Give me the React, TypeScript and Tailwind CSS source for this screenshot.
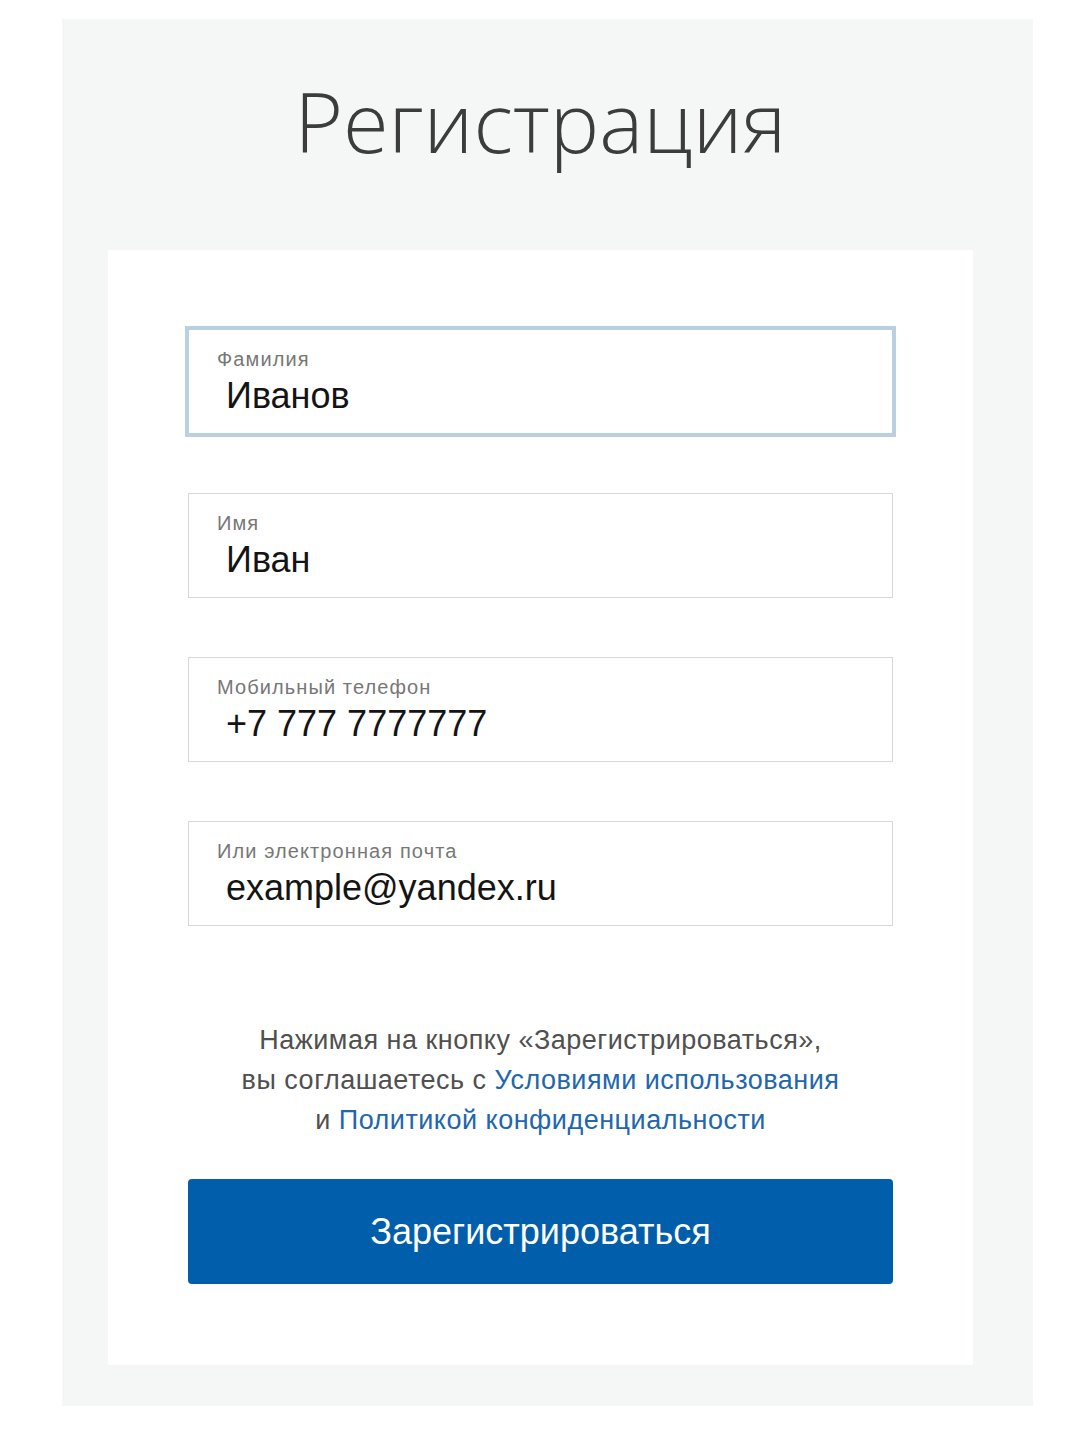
import React from "react";

function Field({ label, value, focused }: { label: string; value: string; focused?: boolean }) {
  return (
    <div
      className={
        focused
          ? "h-[105px] border border-[#b9d0e3] bg-white pl-[28px] pt-[17px] shadow-[0_0_0_3px_#b9d0e3]"
          : "h-[105px] border border-[#d6d9da] bg-white pl-[28px] pt-[17px]"
      }
    >
      <div className="text-[20px] leading-[24px] tracking-[1.1px] text-[#777]">{label}</div>
      <div className="mt-[5px] pl-[9px] text-[36px] leading-[40px] text-[#141414]">{value}</div>
    </div>
  );
}

export default function App() {
  return (
    <div className="min-h-[1449px] bg-white pt-[19px] font-['Liberation_Sans',Arial,sans-serif]">
      <div className="ml-[62px] w-[971px] bg-[#f5f7f7] pb-[41px]">
        <div className="h-[231px] pt-[60px] pr-[14px] text-center font-['Open_Sans',sans-serif] text-[83px] font-light leading-[83px] text-[#3c3c3c]">
          Регистрация
        </div>
        <div className="ml-[46px] w-[865px] bg-white px-[80px] pt-[79px] pb-[81px]">
          <div className="flex flex-col gap-[59px]">
            <Field label="Фамилия" value="Иванов" focused />
            <Field label="Имя" value="Иван" />
            <Field label="Мобильный телефон" value="+7 777 7777777" />
            <Field label="Или электронная почта" value="example@yandex.ru" />
          </div>
          <p className="mt-[94px] text-center text-[27px] leading-[40px] tracking-[0.5px] text-[#505050]">
            Нажимая на кнопку «Зарегистрироваться»,
            <br />
            вы соглашаетесь с <a className="text-[#2266ad]">Условиями использования</a>
            <br />
            и <a className="text-[#2266ad]">Политикой конфиденциальности</a>
          </p>
          <button className="mt-[39px] flex h-[105px] w-full items-center justify-center rounded-[4px] bg-[#005eab] text-[36px] text-white">
            Зарегистрироваться
          </button>
        </div>
      </div>
    </div>
  );
}
